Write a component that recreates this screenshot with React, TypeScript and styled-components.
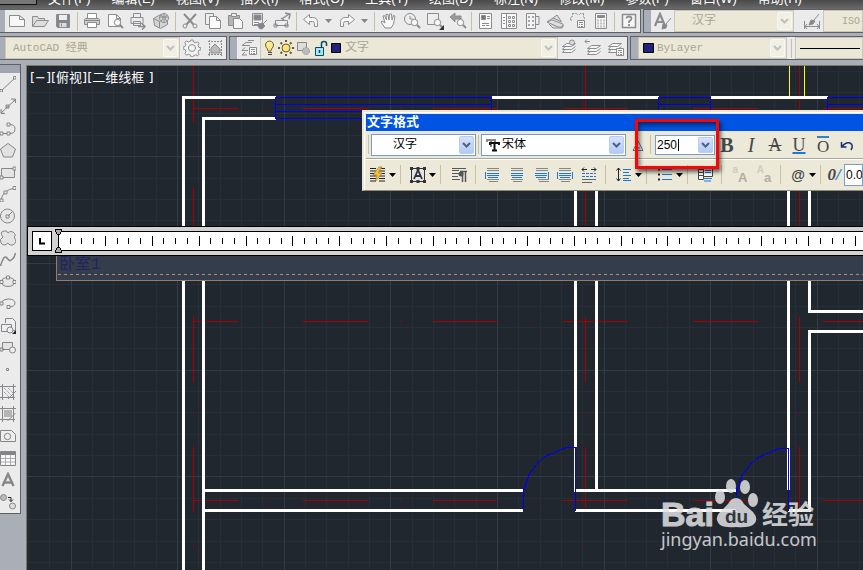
import React, { ReactNode } from "react";
import styled, { createGlobalStyle, css } from "styled-components";

const UI = '"Liberation Sans", "Noto Sans CJK SC", sans-serif';
const MONO = '"Liberation Mono", "Noto Sans CJK SC", monospace';

const Global = createGlobalStyle`
  * { box-sizing: border-box; }
  body { margin: 0; background: #aaaeb7; font-family: ${UI}; font-size: 12px; overflow: hidden; }
  button, select, input { font: inherit; margin: 0; padding: 0; border: 0; background: none; color: inherit; border-radius: 0; outline: 0; }
  svg { display: block; }
`;

const App = styled.div`
  display: flex;
  flex-direction: column;
  height: 100vh;
  overflow: hidden;
`;

const MenuBar = styled.nav`
  display: flex;
  align-items: flex-end;
  gap: 21px;
  height: 9px;
  flex: none;
  overflow: hidden;
  background: linear-gradient(#4a4a4a, #696969);
`;

const AppButton = styled.span`
  align-self: flex-start;
  height: 5px;
  width: 37px;
  margin-right: -10px;
  flex: none;
  background: #777;
  border-right: 1px solid #111;
  border-bottom: 1px solid #111;
`;

const MenuItem = styled.button`
  flex: none;
  color: #fff;
  font-size: 13px;
  line-height: 16px;
  padding-bottom: 2px;
  white-space: nowrap;
`;

const Bars = styled.div`
  display: flex;
  gap: 2px;
  height: 24px;
  flex: none;
  margin-bottom: 3px;
`;

const Bar = styled.div<{ $grow?: boolean; $first?: boolean }>`
  display: flex;
  align-items: center;
  flex: ${(p) => (p.$grow ? "1 0 0" : "none")};
  min-width: 0;
  overflow: hidden;
  background: #ebebeb;
  border: 1px solid #5f6066;
  border-left-width: ${(p) => (p.$first ? 0 : 1)}px;
  border-right-width: ${(p) => (p.$grow ? 0 : 1)}px;
`;

const Grip = styled.span<{ $w: number }>`
  align-self: stretch;
  width: ${(p) => p.$w}px;
  flex: none;
  background: #a9adb8;
`;

const Tool = styled.button<{ $w?: number }>`
  width: ${(p) => p.$w ?? 23}px;
  height: 22px;
  flex: none;
  display: grid;
  place-items: center;
  color: #8b8c90;
`;

const Divider = styled.span<{ $w?: number }>`
  width: ${(p) => p.$w ?? 6}px;
  height: 19px;
  flex: none;
  display: flex;
  justify-content: center;
  &::before { content: ""; width: 1px; background: #c6c1a4; }
`;

const ComboBox = styled.span<{ $w?: number; $muted?: boolean; $h?: number }>`
  position: relative;
  display: flex;
  align-items: center;
  width: ${(p) => (p.$w ? p.$w + "px" : "auto")};
  flex: ${(p) => (p.$w ? "none" : "1 0 0")};
  min-width: 0;
  height: ${(p) => p.$h ?? 22}px;
  overflow: hidden;
  ${(p) =>
    p.$muted
      ? css`background: #ebe8d7; border: 1px solid #c9c7ba; color: #a8a594;`
      : css`background: #fff; border: 1px solid #7f9db9; outline: 1px solid #e3e8e8; color: #000;`}
`;

const Select = styled.select<{ $pad: number; $size?: number }>`
  appearance: none;
  flex: 1;
  min-width: 0;
  height: 100%;
  padding-left: ${(p) => p.$pad}px;
  font-family: ${MONO};
  font-size: ${(p) => p.$size ?? 12}px;
`;

const Field = styled.input<{ $pad: number }>`
  flex: 1;
  width: 20px;
  min-width: 0;
  height: 100%;
  padding-left: ${(p) => p.$pad}px;
`;

const Arrow = styled.span<{ $muted?: boolean }>`
  width: 15px;
  align-self: stretch;
  margin: 1px;
  flex: none;
  display: grid;
  place-items: center;
  pointer-events: none;
  border-radius: 2px;
  background: ${(p) => (p.$muted ? "#f1f0e6" : "linear-gradient(#d6e2fc, #b2caf7)")};
  border: 1px solid ${(p) => (p.$muted ? "#f8f7f0" : "#b9cdf3")};
  color: ${(p) => (p.$muted ? "#c2c1b3" : "#4d6185")};
`;

const HeightBox = styled(ComboBox)`
  &::after {
    content: "";
    position: absolute;
    left: 22px;
    top: 3px;
    width: 1px;
    height: 12px;
    background: #000;
  }
`;

const Body = styled.div`
  display: flex;
  align-items: flex-start;
  flex: 1;
  min-height: 0;
  gap: 5px;
  padding-top: 2px;
`;

const SideBar = styled.div`
  display: flex;
  flex-direction: column;
  flex: none;
  width: 21px;
  margin-top: -1px;
  background: #ebebeb;
  border: 1px solid #5f6066;
  border-left: 0;
`;

const SideGrip = styled.span`
  height: 8px;
  background: #a0a4b0;
`;

const SideTool = styled.button`
  height: 22px;
  width: 17px;
  display: grid;
  place-items: center start;
  color: #85868a;
`;

const Canvas = styled.main`
  position: relative;
  flex: 1;
  min-width: 0;
  align-self: stretch;
  overflow: hidden;
  background: #21272f;
  border: solid #7a7969;
  border-width: 1px 0 0 1px;
`;

const Plan = styled.svg`
  width: 100%;
  height: 100%;
`;

const ViewLabel = styled.button`
  position: absolute;
  left: 3px;
  top: 4px;
  color: #fff;
  font: 13px/16px "DejaVu Sans", "Noto Sans CJK SC", sans-serif;
  white-space: nowrap;
`;

const TextEditor = styled.section`
  position: absolute;
  left: 0;
  right: 0;
  top: 160px;
`;

const Ruler = styled.div`
  display: flex;
  align-items: center;
  height: 30px;
  border: 1px solid #000;
  border-right: 0;
  background: #d2d2d2;
  padding-left: 4px;
`;

const TabStop = styled.button`
  width: 20px;
  height: 20px;
  flex: none;
  display: grid;
  place-items: center;
  background: #fff;
  border: 1px solid #000;
`;

const Scale = styled.svg`
  flex: 1;
  min-width: 0;
  height: 28px;
`;

const TextArea = styled.div`
  margin-left: 29px;
  height: 25px;
  background: #333d4b;
  border: solid #967c6a;
  border-width: 0 0 1px 1px;
`;

const TextInput = styled.input`
  display: block;
  width: 100%;
  height: 18px;
  padding-left: 2px;
  color: #23235f;
  font: 16px/18px ${MONO};
`;

const Dashes = styled.div`
  height: 1px;
  margin-left: 1px;
  background: repeating-linear-gradient(90deg, #b3906c 0 3px, transparent 3px 6px);
`;

const Dialog = styled.section`
  position: absolute;
  left: 335px;
  right: 0;
  top: 44px;
  height: 81px;
  overflow: hidden;
  background: #ece9d8;
  border: solid #e9e6d5;
  border-width: 2px 0 1px 2px;
  border-bottom-color: #8e8b7c;
  box-shadow: inset 1px 1px #fff;
  padding: 2px 0 0 2px;
`;

const Title = styled.h2`
  margin: 0;
  height: 17px;
  padding-left: 1px;
  background: #0054e3;
  color: #fff;
  font: bold 13px/16px ${UI};
`;

const FormatRow = styled.div<{ $second?: boolean }>`
  display: flex;
  align-items: center;
  height: ${(p) => (p.$second ? 32 : 27)}px;
  ${(p) => p.$second && css`border-top: 1px solid #aaa797; box-shadow: inset 0 1px #fff;`}
`;

const Spacer = styled.span<{ $w: number }>`
  width: ${(p) => p.$w}px;
  flex: none;
`;

const Letter = styled.button<{ $kind: "bold" | "italic" | "under" | "over" | "strike" | "at" | "slant" }>`
  width: ${(p) => (p.$kind === "at" || p.$kind === "slant" ? 20 : 24)}px;
  flex: none;
  text-align: center;
  color: #46474b;
  font: 18px/20px "Liberation Serif", serif;
  ${(p) => p.$kind === "bold" && css`font-weight: 700; font-size: 20px;`}
  ${(p) => p.$kind === "italic" && css`font-style: italic; font-size: 20px;`}
  ${(p) => p.$kind === "strike" && css`text-decoration: line-through;`}
  ${(p) => p.$kind === "under" && css`text-decoration: underline 2px #1c78d2;`}
  ${(p) => p.$kind === "at" && css`font: bold 14px/20px ${UI};`}
  ${(p) => p.$kind === "slant" && css`font: italic bold 17px/20px "Liberation Serif", serif; i { color: #1c78d2; }`}
`;

const OverBar = styled.span`
  display: block;
  width: 12px;
  height: 18px;
  margin: 0 auto;
  border-top: 2px solid #2f80cf;
  line-height: 17px;
  font-size: 17px;
`;

const CaseMark = styled.button`
  width: 24px;
  height: 20px;
  flex: none;
  display: flex;
  align-items: flex-end;
  justify-content: center;
  color: #b0aea4;
  font: bold 13px/14px ${UI};
`;

const CaseFrom = styled.span`
  align-self: flex-start;
  font-size: 10px;
  line-height: 10px;
  color: #cfccbc;
`;

const Highlight = styled.div`
  position: absolute;
  left: 608px;
  top: 53px;
  width: 84px;
  height: 50px;
  border: 3px solid #f80505;
  box-shadow: 2px 3px 4px rgba(0, 0, 0, 0.6), inset 2px 3px 4px rgba(0, 0, 0, 0.5);
  pointer-events: none;
`;

const Watermark = styled.div`
  position: absolute;
  left: 634px;
  top: 412px;
  width: 160px;
  color: #e0e1e2;
  opacity: 0.86;
`;

const Brand = styled.div`
  display: flex;
  align-items: flex-end;
  height: 52px;
`;

const BrandWord = styled.span`
  font: bold 34px/32px "Liberation Sans", sans-serif;
  -webkit-text-stroke: 1px currentColor;
`;

const BrandCjk = styled.span`
  margin-left: 4px;
  font: bold 26px/34px "Noto Sans CJK SC", sans-serif;
`;

const Site = styled.a`
  display: block;
  color: inherit;
  text-decoration: none;
  font: 18px/18px "Noto Sans", sans-serif;
`;

const G = ({ children, w = 18, h = 18 }: { children: ReactNode; w?: number; h?: number }) => (
  <svg width={w} height={h} viewBox={`0 0 ${w} ${h}`} fill="none" stroke="currentColor" strokeWidth="1" aria-hidden="true">
    {children}
  </svg>
);

const magnifier = (
  <>
    <circle cx="11.5" cy="10.5" r="3.2" fill="#f8f8f8" />
    <path d="m14 13 3 3" strokeWidth="2" />
  </>
);

const layers = <path d="M5.5 4.5h9l-4 3h-9zM4 7.5l-2.500 3h9l4-3M4 10.500l-2.500 3h9l4-3" fill="#f5f5f5" />;

const panel = (x: number, y: number) => (
  <>
    <path d={`M${x + 0.5} ${y + 0.5}h7v7h-7z`} fill="#f8f8f8" />
    <path d={`M${x + 2} ${y + 2.5}h4M${x + 2} ${y + 4.5}h1m1 0h2M${x + 2} ${y + 6.5}h1m1 0h2`} />
  </>
);

const icons: Record<string, ReactNode> = {
  新建: <path d="M1.500 3.500h10l5 4v7h-15zM11.500 3.500v4h5" fill="#f7f7f7" />,
  打开: <path d="M1.500 14.500v-10h5l1 2h6v2M1.500 14.500l4-6h12l-4 6z" fill="#ddd" />,
  保存: (
    <>
      <path d="M2.500 2.500h13v13h-12l-1-1z" fill="#85868a" />
      <path d="M5 3h8v5H5z" fill="#eee" stroke="none" />
      <path d="M5.500 11h7v4h-7z" fill="#ddd" stroke="none" />
      <path d="M7.500 11.500v3" />
    </>
  ),
  打印: (
    <>
      <path d="M4.500 6V1.500h9V6" fill="#fff" />
      <path d="M2.500 6.500h13l1 1v5h-15v-5z" fill="#c9c9c9" />
      <path d="M4.500 10.500h9v5h-9z" fill="#fff" />
      <path d="M2 8.500h14" />
    </>
  ),
  打印预览: <><path d="M2.500 14.500v-12h8l4 4v8z" fill="#fafafa" /><path d="M10.500 2.500v4h4" />{magnifier}</>,
  发布: (
    <>
      <path d="M4.500 5V1.500h7V5M2 5.500h12v6H2zM4.500 9.500h7v4h-7z" fill="#ececec" />
      <path d="M9 14.500h7m-3-3 3 3-3 3" strokeWidth="1.500" />
    </>
  ),
  三维打印: (
    <>
      <path d="m1.500 6.500 7-4 7 3v7l-7 4-6-3z" fill="#d4d4d4" />
      <path d="m1.500 6.500 6 3 8-4M7.500 9.500v6" />
      <circle cx="12" cy="6" r="4.500" fill="#dadada" />
      <path d="M12 1.500v9M8 5h8M9.500 3q3 3 0 6m5-6q-3 3 0 6" />
    </>
  ),
  剪切: (
    <>
      <path d="M3 2l10 11M15 2 5 13" strokeWidth="2" />
      <circle cx="4" cy="14" r="2" fill="#eee" />
      <circle cx="14" cy="14" r="2" fill="#eee" />
    </>
  ),
  复制: <><path d="M1.500 1.500h8v11h-8z" fill="#eee" /><path d="M5.500 4.500h7l4 4v8h-11zM12.500 4.500v4h4" fill="#fafafa" /></>,
  粘贴: <><path d="M1.500 3.500h11v10h-11z" fill="#b5b5b5" /><path d="M4.500 1.500h5v3h-5z" fill="#eee" /><path d="M6.500 6.500h6l3 3v7h-9z" fill="#f6f6f6" /></>,
  特性匹配: (
    <>
      <path d="M2.500 1.500h10v12h-10z" fill="#f4f4f4" />
      <path d="M4 3h7v5H4z" fill="#85868a" />
      <path d="M4 10.500h5m-5 2h4" />
      <path d="M17 8l-4 4M8 12l4-1 3 3-3 3c-3 0-4-2-4-5z" fill="#85868a" />
    </>
  ),
  块编辑器: <><path d="M2.500 8.500h12v5h-12zM1 12h3v3H1zM12 12h3v3h-3z" fill="#eee" /><path d="m9 7 7-5m-4-1 5 1-1 5M8 6l3 2" strokeWidth="1.500" /></>,
  放弃: <path d="m1.500 7.500 6-5v3h3q5 0 5 5v4h-3v-3q0-2-2-2h-3v3z" fill="#f8f8f8" />,
  重做: <path d="m16.500 7.500-6-5v3h-3q-5 0-5 5v4h3v-3q0-2 2-2h3v3z" fill="#f8f8f8" />,
  平移: <path d="m5 16-4-6 1-1 3 2-2-7 1.500-.5L6.500 8 6 2.500h2L9 8l.500-6h2L12 8l1.500-4.500 1.500.5-1.500 8-2.500 4z" fill="#fafafa" />,
  实时缩放: <><circle cx="7" cy="7" r="5.500" fill="#eee" /><path d="M7 4v3h3" />{magnifier}</>,
  窗口缩放: <><path d="M1.500 1.500h11v11h-11z" fill="#eee" />{magnifier}<path d="M18 13v5h-5z" fill="#333" stroke="none" /></>,
  缩放上一个: <><path d="m1 5 5-4v3h6v3H6v3z" fill="#999" />{magnifier}</>,
  特性: <><path d="M2.500 1.500h12v15h-12z" fill="#fafafa" /><path d="M4.500 3.500h4v4h-4z" fill="#777" /><path d="M10 4.500h3m-3 2h3M5 11.500h7M5 13.500h3m1 0h3" /></>,
  设计中心: <><path d="M1.500 1.500h15v15h-15z" fill="#fafafa" /><path d="M6.500 2v14M3 5.500h2m-2 3h2m-2 3h2M8.500 4.500h2v2h-2zM12.500 4.500h2v2h-2zM8.500 8.500h2v2h-2zM12.500 8.500h2v2h-2zM8.500 12.500h2v2h-2zM12.500 12.500h2v2h-2z" /></>,
  工具选项板: <><path d="M3.500 1.500h9v15h-9z" fill="#f4f4f4" /><path d="M5.500 4.500h1v1h-1zm4 0h1v1h-1zm-4 4h1v1h-1zm4 0h1v1h-1zm-4 4h1v1h-1zm4 0h1v1h-1zM13 4.500h3v8h-3" /></>,
  图纸集: <path d="m1 10 11 5h5v-3L6 8zM1 10l6-4 9 4M7 6l4-3 4 6M3 12l4 4h9l1-3" fill="#ddd" />,
  标记集: <><path d="M3 8H1.500V5.500l2-1v-3h4l1 1h2l1-1h3v3l1 2-1 2" strokeDasharray="3 1" />{panel(8, 8)}</>,
  计算器: <><path d="M3.500 1.500h11v15h-11z" fill="#f6f6f6" /><path d="M5.500 3.500h7v2h-7z" fill="#888" /><path d="M5.500 8.500h1m2 0h1m2 0h1m-7 3h1m2 0h1m2 0h1m-7 3h1m2 0h1m2 0h1" strokeWidth="2" /></>,
  帮助: <><path d="M2.500 2.500h13v13h-13z" fill="#f6f6f6" strokeWidth="1.500" /><path d="M6.500 6.500q0-2 2.500-2t2.500 2Q11.500 8 9 9.500V11m0 1v2" strokeWidth="1.800" /></>,
  文字样式: <><path d="M1 14 6 2l5 12M3 10h6" strokeWidth="2.200" /><path d="m17 6-5 6m-3 0 4 1-1 3-4 1z" fill="#85868a" /></>,
  标注样式: <><path d="M1.500 9v8m15-8v8M2 14.500h14M4 12l-2 2.500L4 17m10-5 2 2.500L14 17" /><path d="m16 2-5 6m-3 0 4 1-2 3-4 1z" fill="#85868a" /></>,
  工作空间设置: (
    <>
      <path d="M8 1h2l.5 2 2 .8 2-1 1.500 1.500-1 2 .8 2 2 .5v2l-2 .5-.8 2 1 2-1.500 1.500-2-1-2 .8L10 18H8l-.5-2-2-.8-2 1L2 14.700l1-2-.8-2L0 10V8l2-.5.8-2-1-2L3.500 2l2 1 2-.8z" fill="#f3f3f3" />
      <circle cx="9" cy="9" r="3.500" />
    </>
  ),
  我的工作空间: <><path d="M2 2.500h14M2 15.500h14M3.500 1v16M15.500 1v16" strokeDasharray="2 1" /><path d="M5 14V9l4-4 5 5v4z" fill="#bbb" /></>,
  图层特性: <><path d="M12 3.500H6l-4 3h8M5 8.500l-3 3h6M5 13l-3 3h5M14 1.500H8" />{panel(9, 8)}</>,
  置为当前: <>{layers}<circle cx="11" cy="3.500" r="2.500" fill="#ddd" /></>,
  上一个图层: <><g transform="translate(2 2)">{layers}</g><path d="M6 2.500H1m2-2-2 2 2 2" /></>,
  图层状态: <>{layers}{panel(9, 9)}</>,
};

const side: Record<string, ReactNode> = {
  直线: <><path d="M1 15 15 2" /><path d="M0 13.500h2.500V16H0zM13.500.500H16V3h-2.500z" fill="#eee" /></>,
  构造线: <path d="M1 15 15 2M1 11v4.500h4M11 1h4.500v4M6 7h3v3H6z" fill="#ccc" />,
  多段线: <><path d="M1 13.500h9q5 0 5-4.500t-5-4.500H8" /><path d="M0 12h3v3H0zM7 12h3v3H7zM7 3h3v3H7z" fill="#eee" /></>,
  正多边形: <path d="m8 1.500 7.500 5.500-3 8h-9l-3-8z" fill="#e2e2e2" />,
  矩形: <><path d="M1.500 4.500h13v9h-13z" fill="#e4e4e4" /><path d="M0 12h3v3H0zM13 3h3v3h-3z" fill="#eee" /></>,
  圆弧: <><path d="M1 15Q2 4 15 2" /><path d="M0 13h3v3H0zM4 5h3v3H4zM13 .500h3v3h-3z" fill="#eee" /></>,
  圆: <><circle cx="7.500" cy="8" r="7" fill="#e7e7e7" /><path d="m8 8 4-4M6 7h3v3H6z" /></>,
  修订云线: <path d="M3 7Q-1 2 4 1q3-1 4 2 2-3 5-1 4 3 1 5 4 5-1 8-4 1-5-2-4 4-7 0Q-1 9 3 7z" fill="#e4e4e4" />,
  样条曲线: <path d="M.500 14Q4 2 7 6t4 2q3-1 4.500-7" strokeWidth="1.500" />,
  椭圆: <><ellipse cx="8" cy="8" rx="7" ry="4.500" fill="#e7e7e7" /><path d="M0 6.500h3v3H0zM13 6.500h3v3h-3zM6.500 2h3v3h-3z" fill="#eee" /></>,
  椭圆弧: <><path d="M1 7q2-4 7-4 7 0 7 4t-7 4" /><path d="M0 6h3v3H0zM7 9.500h3v3H7z" fill="#eee" /></>,
  插入块: <><path d="M5.500 5V.500h7l3 3v9h-4M1.500 6.500h10v7h-10z" fill="#eee" /><circle cx="10" cy="12" r="3" fill="#eee" /><path d="M16 12v4h-4z" fill="#222" stroke="none" /></>,
  创建块: <><path d="M2.500 2.500h10v7h-10zM0 8h3v3H0z" fill="#e4e4e4" /><circle cx="12.500" cy="10" r="3" fill="#eee" /></>,
  点: <path d="M6.500 6.500h2v2h-2z" />,
  图案填充: <><path d="M0 2.500h16M0 13.500h15M2.500 0v16M13.500 0v16" /><path d="m4 8 5 5M4 4l9 9M8 4l5 5" strokeDasharray="1 1" /><path d="m8 15 8-8" /></>,
  渐变色: <><path d="M4 4h8v7H4z" fill="#b5b5b5" stroke="none" /><path d="M0 2.500h16M0 13.500h15M2.500 0v16M13.500 0v16m-6-1 8-8" /></>,
  面域: <><path d="M.500 2.500h11l4 4v7H.500z" fill="#eee" /><circle cx="7.500" cy="8.500" r="3.200" /></>,
  表格: <><path d="M.500 1.500h15v14H.500z" fill="#f8f8f8" /><path d="M1 3.500h15" strokeWidth="3" /><path d="M1 8.500h14m-14 3.500h14M5.500 4v11m5-11v11" opacity=".6" /></>,
  多行文字: <path d="M2.500 14 8 2l5.500 12M4.500 10.500h7" strokeWidth="2.400" />,
  添加选定对象: <><circle cx="3.500" cy="3.500" r="3" fill="#bbb" /><circle cx="12.500" cy="12" r="3" fill="#ddd" /><path d="M8 3.500h3v4m-2-2 2 2 2-2" stroke="#222" /></>,
};

const T = ({ name }: { name: string }) => (
  <Tool aria-label={name}><G>{icons[name]}</G></Tool>
);

const Drop = ({ w = 13, color = "#000" }: { w?: number; color?: string }) => (
  <Tool $w={w} aria-label="更多">
    <svg width="7" height="4" fill={color}><path d="M0 0h7L3.500 4z" /></svg>
  </Tool>
);

const Chevron = ({ muted }: { muted?: boolean }) => (
  <Arrow $muted={muted}>
    <svg width="9" height="6" fill="none" stroke="currentColor" strokeWidth="2"><path d="m1 1 3.500 3.500L8 1" /></svg>
  </Arrow>
);

const Combo = ({ label, value, w, pad, size, muted, icon, h }: {
  label: string; value: string; w?: number; pad: number; size?: number; muted?: boolean; icon?: ReactNode; h?: number;
}) => (
  <ComboBox $w={w} $muted={muted} $h={h}>
    {icon}
    <Select $pad={pad} $size={size} aria-label={label} defaultValue={value}>
      <option>{value}</option>
    </Select>
    {w && <Chevron muted={muted} />}
  </ComboBox>
);

const swatch = <svg width="11" height="10"><path d="M.5.5h10v9H.5z" fill="#22227c" stroke="#000" /></svg>;

const layerState = (
  <svg width="81" height="18" fill="none">
    <path d="M7 12q0-2-2-4a4 4 0 1 1 7 0q-2 2-2 4z" fill="#ffe98a" stroke="#6b6440" />
    <path d="M7 13.500h4M7 15.500h4" stroke="#444" />
    <g stroke="#665c32"><circle cx="25" cy="9" r="4" fill="#ffe17a" /><path d="M25 1v2m0 12v2M17 9h2m12 0h2M19.500 3.500 21 5m8 8 1.500 1.500m0-11L29 5m-8 8-1.500 1.500" strokeWidth="2" /></g>
    <path d="M36.500 3.500h9v8h-9z" fill="#ddd" stroke="#888" />
    <circle cx="45" cy="12" r="3.500" fill="#bbb" stroke="#999" strokeDasharray="2 1" />
    <path d="M54.500 8.500h8v8h-8z" fill="#a9e6f7" stroke="#064a68" />
    <path d="M60.500 8V4.500q0-2 2.500-2t2.500 2V7M58.500 11v3" stroke="#064a68" strokeWidth="1.500" />
    <path d="M70.500 4.500h9v9h-9z" fill="#22227c" stroke="#000" />
  </svg>
);

const fontMark = (
  <svg width="14" height="14" fill="none" strokeWidth="2">
    <path d="M1 4V2h8v2M5 2v7" stroke="#888" />
    <path d="M4 7V5h9v2M8.500 5v8M6 12.500h5" stroke="#111" />
  </svg>
);

type LineKind = "left" | "center" | "right" | "justify" | "spread";

const Lines = ({ kind }: { kind: LineKind }) => (
  <svg width="18" height="18" fill="none" strokeWidth="1">
    {kind === "spread" ? (
      <>
        <path d="M2 3.500h5m4 0h5M4 1.500l-2 2 2 2m10-4 2 2-2 2" stroke="#222" />
        <path d="M2 7.500h14M2 10.500h14" stroke="#1c78d2" strokeDasharray="3 1" />
        <path d="M2 13.500h14M2 16.500h10" stroke="#666" />
      </>
    ) : (
      <>
        <path d={kind === "right" ? "M4 2.500h12M4 4.500h12M6 13.500h11M7 15.500h10" : "M3 2.500h12M3 4.500h12M3 13.500h12M5 15.500h9"} stroke="#85868a" />
        <path d="M3 7.500h12M3 9.500h12M4 11.500h10" stroke="#1c78d2" />
        {(kind === "left" || kind === "justify") && <path d="M1.500 6v7" stroke="#1c78d2" />}
        {(kind === "right" || kind === "justify") && <path d="M16.500 6v7" stroke="#1c78d2" />}
      </>
    )}
  </svg>
);

const alignments: [LineKind, string][] = [["left", "左对齐"], ["center", "居中"], ["right", "右对齐"], ["justify", "对正"], ["spread", "分布"]];

const columnsIcon = <G><path d="M1 2.500h6m3 0h6M1 5h6m3 0h6M1 7.500h6m3 0h6M1 10h6m3 0h6M1 12.500h6m3 0h6M1 15h6m3 0h6" stroke="#222" /><path d="m10 1-6 8h4l-2 7 7-9H9l4-6z" fill="#ffc637" stroke="#9a7221" strokeWidth=".7" /></G>;
const attachIcon = <G><path d="M2.500 2.500h13v13h-13z" fill="#e3e3ea" stroke="#333" /><path d="M1 1h3v3H1zm6.500 0h3v3h-3zM14 1h3v3h-3zM1 14h3v3H1zm6.500 0h3v3h-3zM14 14h3v3h-3z" fill="#333" stroke="none" /><path d="m5 13 4-9 4 9M6.500 10h5" stroke="#333" strokeWidth="1.800" /></G>;
const paragraphIcon = <G><path d="M2 2.500h14M2 4.500h7m-7 3h7m-7 3h6m-6 3h8" stroke="#55565a" /><path d="M10 5.500h7M12.500 5v11m3-11v11" stroke="#55565a" strokeWidth="1.500" /><circle cx="11" cy="8" r="2.500" fill="#55565a" stroke="none" /></G>;
const spacingIcon = <G><path d="M3.500 2v13M1.500 4.500l2-2.500 2 2.500m-4 8 2 2.500 2-2.500" stroke="#222" /><path d="M8 3.500h8M8 6.500h6m-6 3h8m-8 3h6m-6 2h8" stroke="#1c78d2" /></G>;
const listIcon = <G><path d="M2 3.500h2m-2 5h2m-2 5h2" stroke="#222" strokeWidth="2" /><path d="M6 3.500h10M6 8.500h10M6 13.500h10" stroke="#1c78d2" /></G>;
const fieldIcon = <G><path d="M2.500 3.500h5v10h-5z" fill="#fff" stroke="#444" /><path d="M7.500 1.500h9v9h-9z" fill="#fff" stroke="#444" /><path d="M9 4.500h6m-6 2h6m-8 6h9m-8 2.500h7" stroke="#1c78d2" /><path d="M2 6.500h5M2 9.500h5" stroke="#444" /></G>;

const column = (i: number) => Math.floor(71 + i * 21.32);
const row = (i: number) => Math.floor(156.7 + i * 21.35);
const range = (n: number) => Array.from({ length: n }, (_, i) => i);
const major = (i: number) => i % 5 === 0;
const gridIndexes = range(120).map((i) => i - 4);

const FloorPlan = () => (
  <Plan aria-label="平面图">
    <g transform="translate(-27 -66)" fill="none" shapeRendering="crispEdges">
      {[false, true].map((strong) => (
        <g key={String(strong)} stroke={strong ? "#323b49" : "#272e38"}>
          {gridIndexes.filter((i) => major(i) === strong).map((i) => (
            <path key={i} d={`M${column(i)}.5 66V2400M27 ${row(i)}.5H3000`} />
          ))}
        </g>
      ))}
      <g stroke="#a80000" strokeDasharray="65 32 1 32">
        {[193, 585, 799].map((x) => <path key={x} d={`M${x}.5 57V2000`} />)}
        {[108, 321, 500].map((y) => <path key={y} d={`M193 ${y}.5H3000`} strokeDashoffset="20" />)}
      </g>
      <path stroke="#ffff00" d="M789.500 66v31M804.500 66v31" />
      <g stroke="#fff" strokeWidth="3">
        <path d="M183.500 1200V97.500H276M203.500 1200V118.500H276M492 97.500h167M711 97.500h117" />
        <path d="M204 490.500h319M204 510.500h319M575.500 118v329M596.500 118v372M574 490.500h163M575 510.500h162" />
        <path d="M788.500 118v372M809.500 118v193.500H3000M3000 331.500H809.500v179H788" />
      </g>
      <path d="M574.500 447v44" stroke="#fff" />
      <g stroke="#0000f0">
        <path d="M275.500 97v21M491.500 97v21M275 97.500h217M275 104.500h217M275 111.500h217M275 118.500h217" />
        <path d="M658.500 97v21M710.500 97v21M658 97.500h53M658 104.500h53M3000 97.500H827.500v21M828 104.500H3000" />
        <path d="M575.500 447v64M788.500 448v63M523.500 488v23M736.500 488v23" />
        <path d="M575 447.500h-8l-6 2-9 4-7 3-7 6-3 4-6 8-3 9-2 6M788 448.500h-8l-6 2-9 4-7 3-7 6-3 4-6 8-3 9-2 6" />
      </g>
    </g>
  </Plan>
);

const menus = ["文件(F)", "编辑(E)", "视图(V)", "插入(I)", "格式(O)", "工具(T)", "绘图(D)", "标注(N)", "修改(M)", "参数(P)", "窗口(W)", "帮助(H)"];

export default function CadWindow() {
  return (
    <App>
      <Global />
      <MenuBar>
        <AppButton />
        {menus.map((m) => <MenuItem key={m}>{m}</MenuItem>)}
      </MenuBar>
      <Bars>
        <Bar $first>
          <Grip $w={5} />
          {["新建", "打开", "保存"].map((n) => <T key={n} name={n} />)}
          <Divider />
          {["打印", "打印预览", "发布", "三维打印"].map((n) => <T key={n} name={n} />)}
          <Divider />
          {["剪切", "复制", "粘贴", "特性匹配", "块编辑器"].map((n) => <T key={n} name={n} />)}
          <Divider />
          <T name="放弃" />
          <Drop color="#85868a" />
          <T name="重做" />
          <Drop color="#85868a" />
          <Divider />
          {["平移", "实时缩放", "窗口缩放", "缩放上一个"].map((n) => <T key={n} name={n} />)}
          <Divider $w={5} />
          {["特性", "设计中心", "工具选项板", "图纸集", "标记集", "计算器"].map((n) => <T key={n} name={n} />)}
          <Divider $w={5} />
          <T name="帮助" />
        </Bar>
        <Bar $grow>
          <Grip $w={7} />
          <T name="文字样式" />
          <Combo label="文字样式列表" value="汉字" w={120} pad={17} muted />
          <Spacer $w={6} />
          <T name="标注样式" />
          <Combo label="标注样式列表" value="ISO-25" pad={18} size={10} muted />
        </Bar>
      </Bars>
      <Bars>
        <Bar $first>
          <Grip $w={5} />
          <Combo label="工作空间" value="AutoCAD 经典" w={175} pad={7} size={11} muted />
          <T name="工作空间设置" />
          <T name="我的工作空间" />
        </Bar>
        <Bar>
          <Grip $w={7} />
          <T name="图层特性" />
          <Combo label="图层" value="文字" w={298} pad={3} icon={layerState} muted />
          <T name="置为当前" />
          <T name="上一个图层" />
          <T name="图层状态" />
        </Bar>
        <Bar $grow>
          <Grip $w={7} />
          <ComboBox $w={149} $muted>
            <Spacer $w={4} />
            {swatch}
            <Select $pad={3} $size={11} aria-label="颜色" defaultValue="ByLayer"><option>ByLayer</option></Select>
            <Chevron muted />
          </ComboBox>
          <Divider $w={8} />
          <ComboBox $muted>
            <svg width="100%" height="20"><path d="M4 10.500h60" stroke="#000" /></svg>
          </ComboBox>
        </Bar>
      </Bars>
      <Body>
        <SideBar>
          <SideGrip />
          {Object.keys(side).map((n) => (
            <SideTool key={n} aria-label={n}><G w={16} h={16}>{side[n]}</G></SideTool>
          ))}
        </SideBar>
        <Canvas>
          <FloorPlan />
          <ViewLabel>[−][俯视][二维线框 ]</ViewLabel>
          <TextEditor>
            <Ruler>
              <TabStop aria-label="制表符">
                <svg width="6" height="7"><path d="M1 0v5.500h5" fill="none" stroke="#000" strokeWidth="2" /></svg>
              </TabStop>
              <Scale shapeRendering="crispEdges">
                <path d="M3000 4.500H6.500v19H3000" fill="#fff" stroke="#000" />
                {range(240).map((i) => (
                  <path key={i} d={`M${Math.floor(18.2 + i * 11.72)}.5 ${i % 4 === 3 ? "9v10" : "11v6"}`} stroke="#000" />
                ))}
                <path d="M3.500 2.500h6v2l-2 3h-2l-2-3zM3.500 25.500h6v-2l-2-3h-2l-2 3z" fill="#aaa" stroke="#000" />
              </Scale>
            </Ruler>
            <TextArea>
              <TextInput aria-label="文字内容" defaultValue="卧室1" />
              <Dashes />
            </TextArea>
          </TextEditor>
          <Dialog aria-label="文字格式">
            <Title>文字格式</Title>
            <FormatRow>
              <Divider $w={5} />
              <Combo label="样式" value="汉字" w={105} pad={21} />
              <Divider $w={5} />
              <Combo label="字体" value="宋体" w={145} pad={2} icon={<><Spacer $w={4} />{fontMark}</>} />
              <Spacer $w={5} />
              <Tool $w={14} aria-label="注释性"><G w={12} h={14}><path d="M1 12.500h10L6 3zM4 10h4" stroke="#4c7193" /></G></Tool>
              <Divider $w={10} />
              <HeightBox $w={60} $h={20}>
                <Field $pad={1} aria-label="文字高度" defaultValue="250" />
                <Chevron />
              </HeightBox>
              <Letter $kind="bold">B</Letter>
              <Letter $kind="italic">I</Letter>
              <Letter $kind="strike">A</Letter>
              <Letter $kind="under">U</Letter>
              <Letter $kind="over"><OverBar>O</OverBar></Letter>
              <Tool aria-label="放弃"><G w={14} h={12}><path d="M1.500 3v5h5M2 8q3-5 8-4 4 2 1 7" stroke="#1b2f78" strokeWidth="1.500" /></G></Tool>
            </FormatRow>
            <FormatRow $second>
              <Spacer $w={2} />
              <Tool $w={20} aria-label="栏">{columnsIcon}</Tool>
              <Drop w={8} />
              <Divider $w={8} />
              <Spacer $w={4} />
              <Tool $w={20} aria-label="多行文字对正">{attachIcon}</Tool>
              <Drop w={8} />
              <Divider $w={8} />
              <Spacer $w={5} />
              <Tool $w={20} aria-label="段落">{paragraphIcon}</Tool>
              <Spacer $w={2} />
              <Divider $w={8} />
              <Spacer $w={2} />
              {alignments.map(([kind, label]) => (
                <Tool key={kind} $w={24} aria-label={label}><Lines kind={kind} /></Tool>
              ))}
              <Divider $w={8} />
              <Spacer $w={5} />
              <Tool $w={20} aria-label="行距">{spacingIcon}</Tool>
              <Drop w={8} />
              <Divider $w={8} />
              <Spacer $w={5} />
              <Tool $w={20} aria-label="编号">{listIcon}</Tool>
              <Drop w={8} />
              <Divider $w={8} />
              <Spacer $w={4} />
              <Tool $w={20} aria-label="插入字段">{fieldIcon}</Tool>
              <Spacer $w={2} />
              <Divider $w={8} />
              <Spacer $w={3} />
              <CaseMark aria-label="大写"><CaseFrom>a</CaseFrom>A</CaseMark>
              <CaseMark aria-label="小写"><CaseFrom>A</CaseFrom>a</CaseMark>
              <Divider $w={8} />
              <Spacer $w={4} />
              <Letter $kind="at" aria-label="符号">@</Letter>
              <Drop w={8} />
              <Divider $w={8} />
              <Letter $kind="slant" aria-label="倾斜角度">0<i>/</i></Letter>
              <ComboBox>
                <Field $pad={1} aria-label="倾斜角度值" defaultValue="0.0000" />
              </ComboBox>
            </FormatRow>
          </Dialog>
          <Highlight />
          <Watermark>
            <Brand>
              <BrandWord>Bai</BrandWord>
              <svg width="44" height="52" fill="currentColor">
                <ellipse cx="6" cy="19" rx="5" ry="7" /><ellipse cx="17" cy="8" rx="5" ry="7" />
                <ellipse cx="31" cy="9" rx="5" ry="7" /><ellipse cx="39" cy="22" rx="5" ry="7" />
                <path d="M22 20q5 0 8 6l9 8q6 7 1 12-4 4-18 3-13 1-17-3-5-6 1-12l8-8q3-6 8-6z" />
                <text x="11" y="45" fill="#343a42" fontFamily="Liberation Sans" fontWeight="700" fontSize="19">du</text>
              </svg>
              <BrandCjk>经验</BrandCjk>
            </Brand>
            <Site href="#">jingyan.baidu.com</Site>
          </Watermark>
        </Canvas>
      </Body>
    </App>
  );
}
